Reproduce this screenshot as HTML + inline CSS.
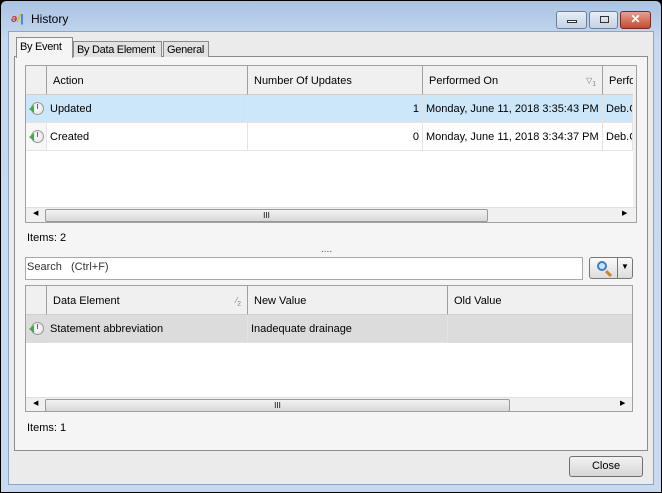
<!DOCTYPE html><html><head><style>
*{box-sizing:border-box;margin:0;padding:0}
body{width:662px;height:493px;overflow:hidden;font-family:"Liberation Sans",sans-serif;font-size:11px;color:#000;background:#000}
.win{position:absolute;left:1px;top:1px;width:660px;height:491px;background:linear-gradient(#a9c3e2,#c6d9ef 40px,#c7daf0);border-radius:5px 5px 0 0}
.client{position:absolute;left:7px;top:30px;width:646px;height:454px;background:#ebebeb;border:1px solid #8ea4c0}
.a{position:absolute;white-space:nowrap}
.title{left:30px;top:11px;font-size:12px}
.tb{position:absolute;top:10px;height:18px;border:1px solid #6d7f97;border-radius:3px;background:linear-gradient(#e6eef8,#c4d3e6)}
.pane{left:14px;top:56px;width:634px;height:395px;background:#f5f5f5;border:1px solid #8c8c8c}
.tab{position:absolute;top:41px;height:16px;border:1px solid #8c8c8c;border-bottom:none;background:#e2e2e2;padding:2px 3px 0;font-size:11px;white-space:nowrap;overflow:hidden;letter-spacing:-0.3px}
.grid{position:absolute;background:#fff;border:1px solid #a0a0a0;overflow:hidden}
.hd{position:absolute;top:0;height:29px;background:#f0f0f0;border-right:1px solid #a0a0a0;border-bottom:1px solid #d0d0d0;padding:9px 6px;white-space:nowrap}
.cell{position:absolute;height:28px;padding:8px 3px;border-right:1px solid #e3e3e3;border-bottom:1px solid #e3e3e3;white-space:nowrap;overflow:hidden}
.ico{position:absolute;width:13px;height:13px;border-radius:50%;border:1px solid #999;background:radial-gradient(#fff,#ddd)}
.ico:before{content:"";position:absolute;left:5px;top:1px;width:1px;height:5px;background:#666}
.ico:after{content:"";position:absolute;left:-3px;top:2px;border:4px solid transparent;border-right:5px solid #3cb043;border-left:none}
.sb{position:absolute;height:15px;background:#f0f0f0;border-top:1px solid #e0e0e0}
.thumb{position:absolute;top:1px;height:13px;border:1px solid #9a9a9a;border-radius:2px;background:linear-gradient(#f2f2f2,#d8d8d8);text-align:center;font-size:8px;line-height:11px}
</style></head><body><div class="win">
<div class="a" style="left:10px;top:12px;width:16px;height:12px;font-size:11px;color:#c33;font-style:italic;font-weight:bold">ə<span style="color:#e8b400">/</span><span style="color:#2a6bd0">|</span></div>
<div class="a title">History</div>
<div class="tb" style="left:555px;width:31px"><div class="a" style="left:10px;top:8px;width:10px;height:3px;border:1px solid #333;background:#fff"></div></div>
<div class="tb" style="left:588px;width:29px"><div class="a" style="left:10px;top:4px;width:9px;height:7px;border:1px solid #333"></div></div>
<div class="tb" style="left:619px;width:31px;background:linear-gradient(#e8a090,#c44a32);border-color:#7a2b20;color:#fff;font-weight:bold;text-align:center;font-size:12px;line-height:15px">✕</div>
<div class="client"></div>
</div>
<div class="a pane"></div>
<div class="tab" style="left:73px;width:89px">By Data Element</div>
<div class="tab" style="left:163px;width:46px">General</div>
<div class="tab" style="left:16px;top:37px;height:21px;width:57px;background:#f5f5f5;padding-top:3px">By Event</div>

<div class="grid" style="left:25px;top:65px;width:612px;height:158px">
<div class="hd" style="left:0;width:21px"></div>
<div class="hd" style="left:21px;width:201px">Action</div>
<div class="hd" style="left:222px;width:175px">Number Of Updates</div>
<div class="hd" style="left:397px;width:180px">Performed On<span style="position:absolute;right:6px;top:10px;font-size:8px;color:#777">▽<sub>1</sub></span></div>
<div class="hd" style="left:577px;width:30px;border-right:none">Perfo</div>
<div class="a" style="left:0;top:29px;width:607px;height:28px;background:#cce6fa"></div>
<div class="cell" style="left:0;top:29px;width:21px;border-right:none"></div>
<div class="ico" style="left:5px;top:36px"></div>
<div class="cell" style="left:21px;top:29px;width:201px">Updated</div>
<div class="cell" style="left:222px;top:29px;width:175px;text-align:right">1</div>
<div class="cell" style="left:397px;top:29px;width:180px">Monday, June 11, 2018 3:35:43 PM</div>
<div class="cell" style="left:577px;top:29px;width:30px">Deb.G</div>
<div class="cell" style="left:0;top:57px;width:21px;background:#f7f7f7"></div>
<div class="ico" style="left:5px;top:64px"></div>
<div class="cell" style="left:21px;top:57px;width:201px">Created</div>
<div class="cell" style="left:222px;top:57px;width:175px;text-align:right">0</div>
<div class="cell" style="left:397px;top:57px;width:180px">Monday, June 11, 2018 3:34:37 PM</div>
<div class="cell" style="left:577px;top:57px;width:30px">Deb.G</div>
<div class="a" style="left:607px;top:0;width:5px;height:158px;background:#f0f0f0"></div>
<div class="sb" style="left:0;top:141px;width:610px"><span class="a" style="left:7px;top:1px;font-size:7px">◀</span><div class="thumb" style="left:19px;width:443px">III</div><span class="a" style="left:596px;top:1px;font-size:7px">▶</span></div>
</div>
<div class="a" style="left:27px;top:232px">Items: 2</div>
<div class="a" style="left:321px;top:244px;font-size:10px;color:#555">....</div>
<div class="a" style="left:25px;top:257px;width:558px;height:23px;background:#fff;border:1px solid #a8a8a8;padding:3px 1px;color:#333">Search &nbsp; (Ctrl+F)</div>
<div class="a" style="left:589px;top:257px;width:44px;height:22px;border:1px solid #777;border-radius:3px;background:linear-gradient(#fafafa,#dcdcdc)"></div>
<div class="a" style="left:617px;top:258px;width:1px;height:20px;background:#777"></div>
<div class="a" style="left:597px;top:261px;width:10px;height:10px;border:2px solid #3a7ccf;border-radius:50%;background:#cfe6ff"></div>
<div class="a" style="left:607px;top:270px;width:3px;height:7px;background:#c8861c;transform:rotate(-45deg)"></div>
<div class="a" style="left:621px;top:262px;font-size:8px">▼</div>

<div class="grid" style="left:25px;top:285px;width:608px;height:127px">
<div class="hd" style="left:0;width:21px"></div>
<div class="hd" style="left:21px;width:201px">Data Element<span style="position:absolute;right:6px;top:10px;font-size:8px;color:#777">⁄<sub>2</sub></span></div>
<div class="hd" style="left:222px;width:200px">New Value</div>
<div class="hd" style="left:422px;width:186px;border-right:none">Old Value</div>
<div class="a" style="left:0;top:29px;width:608px;height:28px;background:#dcdcdc"></div>
<div class="ico" style="left:5px;top:36px"></div>
<div class="cell" style="left:21px;top:29px;width:201px">Statement abbreviation</div>
<div class="cell" style="left:222px;top:29px;width:200px">Inadequate drainage</div>
<div class="sb" style="left:0;top:111px;width:608px"><span class="a" style="left:7px;top:1px;font-size:7px">◀</span><div class="thumb" style="left:19px;width:465px">III</div><span class="a" style="left:594px;top:1px;font-size:7px">▶</span></div>
</div>
<div class="a" style="left:27px;top:422px">Items: 1</div>
<div class="a" style="left:569px;top:456px;width:74px;height:21px;border:1px solid #707070;border-radius:3px;background:linear-gradient(#f2f2f2,#d6d6d6);text-align:center;line-height:19px">Close</div>
</body></html>
